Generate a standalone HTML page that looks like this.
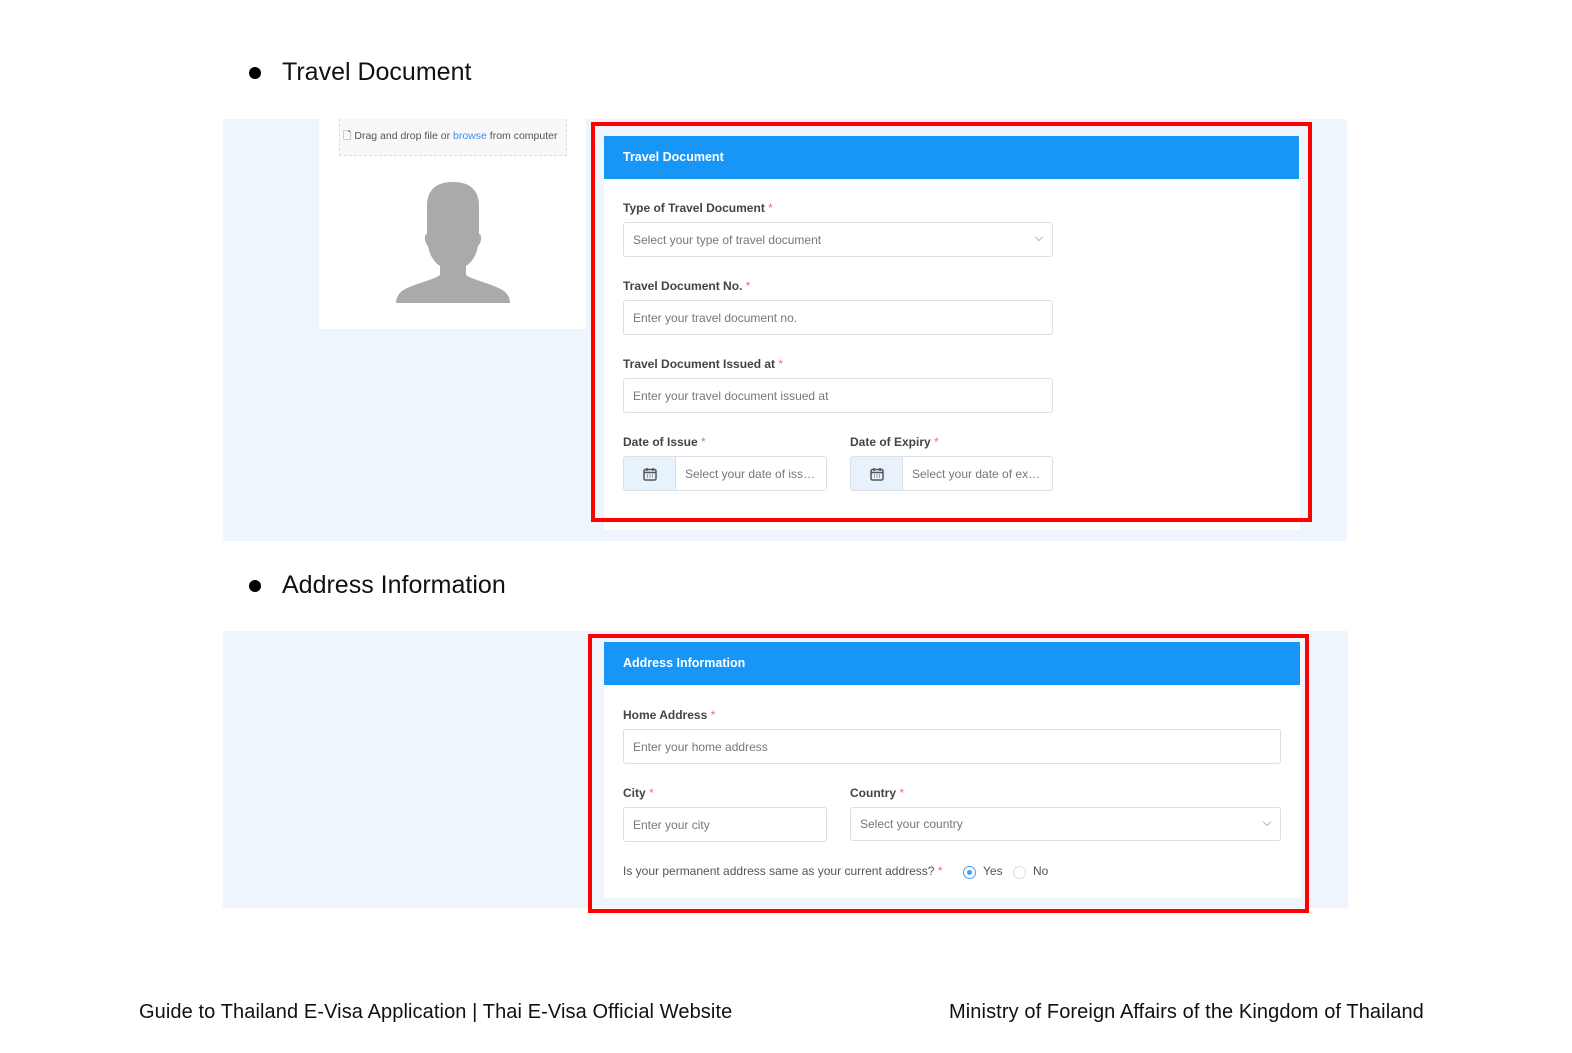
<!DOCTYPE html>
<html><head><style>
*{margin:0;padding:0;box-sizing:border-box}
body{width:1572px;height:1053px;background:#fff;position:relative;font-family:"Liberation Sans",sans-serif;overflow:hidden}
.a{position:absolute}
.h{font-size:25px;color:#111;font-weight:300}
.dot{width:12px;height:12px;border-radius:50%;background:#000}
.bg{background:#eef5fd}
.card{background:#fff}
.red{border:4px solid #f00}
.hdr{background:#1796f7;color:#fff;font-size:12.5px;font-weight:bold;padding-left:19px;line-height:43px}
.lb{font-size:12px;font-weight:bold;color:#444}
.lb span{color:#f56c6c;font-weight:normal}
.in{border:1px solid #dcdfe6;border-radius:3px;background:#fff;font-size:12px;color:#777;padding-left:9px;display:flex;align-items:center;white-space:nowrap}
.add{background:#e8f2fd;border-right:1px solid #dcdfe6;width:52px;flex:none;height:100%;display:flex;align-items:center;justify-content:center;margin-left:-9px;margin-right:9px}
.chev{position:absolute;right:10px;top:11px;width:6px;height:6px;border-right:1px solid #bbb;border-bottom:1px solid #bbb;transform:rotate(45deg)}
.ft{font-size:20px;color:#111;top:1001px;letter-spacing:0.1px}
</style></head><body>
<div class="a dot" style="left:249px;top:67px"></div>
<div class="a h" style="left:282px;top:58px">Travel Document</div>
<div class="a bg" style="left:223px;top:119px;width:1124px;height:422px"></div>
<div class="a card" style="left:319px;top:119px;width:267px;height:210px"></div>
<div class="a" style="left:339px;top:119px;width:228px;height:37px;background:#f8f8f8;border:1px dashed #ddd;border-top:none;font-size:10.5px;color:#555;padding:9px 0 0 3px">🗋 Drag and drop file or <span style="color:#3a8ee6">browse</span> from computer</div>
<svg class="a" style="left:396px;top:181px" width="114" height="122" viewBox="0 0 114 122"><path d="M57 1c-17 0-26 8-26 24v28c-3 0-3 8 1 12 2 10 6 16 12 20v9c-6 5-28 9-38 16-5 4-6 9-6 12h114c0-3-1-8-6-12-10-7-32-11-38-16v-9c6-4 10-10 12-20 4-4 4-12 1-12V25C83 9 74 1 57 1z" fill="#aaa"/></svg>
<div class="a card" style="left:604px;top:136px;width:696px;height:394px"></div>
<div class="a hdr" style="left:604px;top:136px;width:695px;height:43px">Travel Document</div>
<div class="a red" style="left:591px;top:122px;width:721px;height:400px"></div>
<div class="a lb" style="left:623px;top:201px">Type of Travel Document <span>*</span></div>
<div class="a in" style="left:623px;top:222px;width:430px;height:35px">Select your type of travel document<div class="chev"></div></div>
<div class="a lb" style="left:623px;top:279px">Travel Document No. <span>*</span></div>
<div class="a in" style="left:623px;top:300px;width:430px;height:35px">Enter your travel document no.</div>
<div class="a lb" style="left:623px;top:357px">Travel Document Issued at <span>*</span></div>
<div class="a in" style="left:623px;top:378px;width:430px;height:35px">Enter your travel document issued at</div>
<div class="a lb" style="left:623px;top:435px">Date of Issue <span>*</span></div>
<div class="a lb" style="left:850px;top:435px">Date of Expiry <span>*</span></div>
<div class="a in" style="left:623px;top:456px;width:204px;height:35px"><div class="add"><svg width="14" height="14" viewBox="0 0 14 14"><rect x="1" y="2.5" width="12" height="10.5" rx="1.5" fill="none" stroke="#555" stroke-width="1.5"/><path d="M1 5.5h12M4 1v3M10 1v3" stroke="#555" stroke-width="1.5"/><path d="M4 8h1M6.5 8h1M9 8h1M4 10h1M6.5 10h1M9 10h1" stroke="#555"/></svg></div>Select your date of iss…</div>
<div class="a in" style="left:850px;top:456px;width:203px;height:35px"><div class="add"><svg width="14" height="14" viewBox="0 0 14 14"><rect x="1" y="2.5" width="12" height="10.5" rx="1.5" fill="none" stroke="#555" stroke-width="1.5"/><path d="M1 5.5h12M4 1v3M10 1v3" stroke="#555" stroke-width="1.5"/><path d="M4 8h1M6.5 8h1M9 8h1M4 10h1M6.5 10h1M9 10h1" stroke="#555"/></svg></div>Select your date of ex…</div>

<div class="a dot" style="left:249px;top:580px"></div>
<div class="a h" style="left:282px;top:571px">Address Information</div>
<div class="a bg" style="left:223px;top:631px;width:1125px;height:277px"></div>
<div class="a card" style="left:604px;top:642px;width:697px;height:256px"></div>
<div class="a hdr" style="left:604px;top:642px;width:696px;height:43px">Address Information</div>
<div class="a red" style="left:588px;top:634px;width:721px;height:279px"></div>
<div class="a lb" style="left:623px;top:708px">Home Address <span>*</span></div>
<div class="a in" style="left:623px;top:729px;width:658px;height:35px">Enter your home address</div>
<div class="a lb" style="left:623px;top:786px">City <span>*</span></div>
<div class="a lb" style="left:850px;top:786px">Country <span>*</span></div>
<div class="a in" style="left:623px;top:807px;width:204px;height:35px">Enter your city</div>
<div class="a in" style="left:850px;top:807px;width:431px;height:34px">Select your country<div class="chev"></div></div>
<div class="a" style="left:623px;top:864px;font-size:12px;color:#555">Is your permanent address same as your current address?<span style="color:#f56c6c"> *</span></div>
<div class="a" style="left:963px;top:866px;width:13px;height:13px;border-radius:50%;border:1px solid #409eff;background:#fff"><div style="width:5px;height:5px;border-radius:50%;background:#409eff;margin:3px"></div></div>
<div class="a" style="left:983px;top:864px;font-size:12px;color:#555">Yes</div>
<div class="a" style="left:1013px;top:866px;width:13px;height:13px;border-radius:50%;border:1px solid #ddd"></div>
<div class="a" style="left:1033px;top:864px;font-size:12px;color:#555">No</div>

<div class="a ft" style="left:139px">Guide to Thailand E-Visa Application | Thai E-Visa Official Website</div>
<div class="a ft" style="left:949px">Ministry of Foreign Affairs of the Kingdom of Thailand</div>
</body></html>
